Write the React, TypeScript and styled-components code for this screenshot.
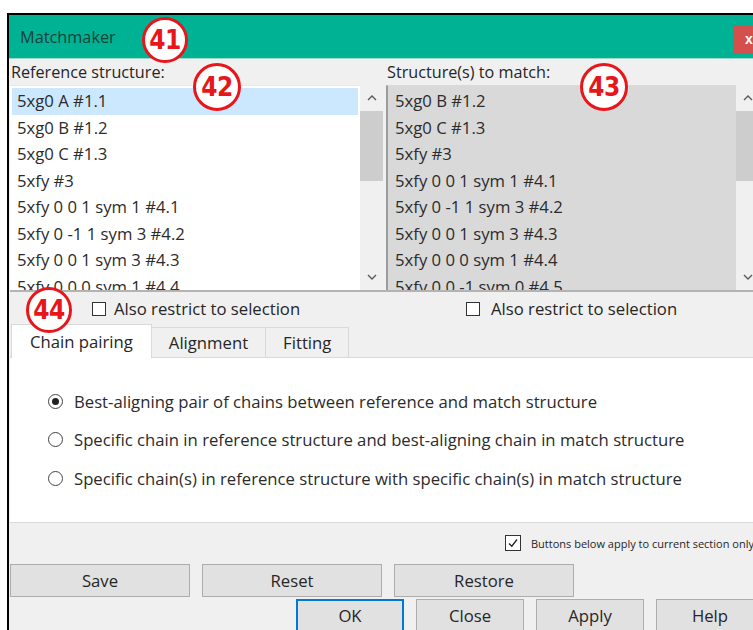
import styled, { createGlobalStyle } from 'styled-components';

const TEXT_SIZE = '16.7px';

const GlobalStyle = createGlobalStyle`
  html, body {
    margin: 0;
    padding: 0;
    background: #fff;
    overflow: hidden;
  }
  body {
    width: 753px;
    height: 630px;
    font-family: 'Open Sans', 'Noto Sans', sans-serif;
    color: #262626;
  }
`;

const Window = styled.div`
  position: relative;
  margin: 13px 0 0 7px;
  width: 755px;
  height: 640px;
  border-top: 2px solid #000;
  border-left: 2px solid #000;
  background: #f0f0f0;
  display: flex;
  flex-direction: column;
`;

const TitleBar = styled.div`
  height: 43px;
  flex: none;
  background: #00b294;
  border-bottom: 1px solid #9ad9cc;
  display: flex;
  align-items: center;
  padding-left: 11px;
`;

const Title = styled.span`
  font-size: 16.3px;
  color: #15413a;
`;

const CloseButton = styled.div`
  margin-left: auto;
  align-self: flex-end;
  margin-bottom: 5px;
  width: 30px;
  height: 28px;
  background: #d4504d;
  color: #fff;
  font: bold 14px 'Liberation Sans', sans-serif;
  display: flex;
  align-items: center;
  justify-content: center;
`;

const Body = styled.div`
  padding-left: 1px;
  display: flex;
  flex-direction: column;
`;

const Columns = styled.div<{ $border?: boolean }>`
  display: grid;
  grid-template-columns: 373px 373px;
  column-gap: 3px;
  ${(p) => (p.$border ? 'border-bottom: 2px solid #b3b3b3;' : '')}
`;

const Label = styled.div`
  height: 26px;
  line-height: 26px;
  font-size: 16.2px;
  padding-left: 1px;
`;

const ListBox = styled.div`
  height: 205px;
  display: flex;
  overflow: hidden;
`;

const Items = styled.div<{ $disabled?: boolean }>`
  flex: 1;
  padding: 2px;
  overflow: hidden;
  background: ${(p) => (p.$disabled ? '#d9d9d9' : '#fff')};
  border-top: 1px solid ${(p) => (p.$disabled ? '#d9d9d9' : '#e6e6e6')};
  ${(p) => (p.$disabled ? 'border-left: 2px solid #9c9c9c;' : '')}
`;

const Row = styled.div<{ $selected?: boolean }>`
  height: 26.5px;
  line-height: 26.5px;
  padding-left: 5px;
  font-size: ${TEXT_SIZE};
  white-space: nowrap;
  color: #2b2b2b;
  background: ${(p) => (p.$selected ? '#cce8ff' : 'transparent')};
`;

const ScrollBar = styled.div`
  width: 23px;
  background: #f0f0f0;
  display: flex;
  flex-direction: column;
  align-items: center;
`;

const Arrow = styled.div`
  height: 26px;
  width: 100%;
  display: flex;
  align-items: center;
  justify-content: center;
`;

const Thumb = styled.div`
  width: 100%;
  height: 70px;
  background: #cdcdcd;
`;

const Track = styled.div`
  flex: 1;
`;

const CheckRow = styled.label<{ $offset: number; $gap: number }>`
  height: 33px;
  display: flex;
  align-items: center;
  gap: ${(p) => p.$gap}px;
  padding-left: ${(p) => p.$offset}px;
  font-size: ${TEXT_SIZE};
  white-space: nowrap;
`;

const Box = styled.span<{ $size?: number }>`
  width: ${(p) => p.$size ?? 14}px;
  height: ${(p) => p.$size ?? 14}px;
  box-sizing: border-box;
  border: 1px solid #333;
  background: #fff;
  display: inline-flex;
  align-items: center;
  justify-content: center;
  flex: none;
`;

const TabStrip = styled.div`
  height: 32px;
  display: flex;
  align-items: flex-end;
  padding-left: 1px;
`;

const Tab = styled.div<{ $active?: boolean }>`
  position: relative;
  z-index: ${(p) => (p.$active ? 1 : 0)};
  box-sizing: border-box;
  height: ${(p) => (p.$active ? 34 : 30)}px;
  padding: 0 ${(p) => (p.$active ? 18 : 17)}px;
  margin-bottom: ${(p) => (p.$active ? -1 : 0)}px;
  display: flex;
  align-items: center;
  font-size: ${TEXT_SIZE};
  white-space: nowrap;
  background: ${(p) => (p.$active ? '#fff' : '#f0f0f0')};
  border: 1px solid #d9d9d9;
  border-bottom: none;
  & + & {
    border-left: none;
  }
`;

const TabPanel = styled.div`
  height: 166px;
  box-sizing: border-box;
  background: #fff;
  border-top: 1px solid #d9d9d9;
  border-bottom: 1px solid #dadada;
  padding: 24px 0 0 38px;
`;

const RadioRow = styled.div`
  height: 38.5px;
  display: flex;
  align-items: center;
  gap: 11px;
  font-size: ${TEXT_SIZE};
  white-space: nowrap;
  color: #2b2b2b;
`;

const RadioDot = styled.span<{ $checked?: boolean }>`
  width: 15px;
  height: 15px;
  box-sizing: border-box;
  border-radius: 50%;
  border: 1px solid #444;
  display: inline-flex;
  align-items: center;
  justify-content: center;
  flex: none;
  &::after {
    content: '';
    width: 7px;
    height: 7px;
    border-radius: 50%;
    background: ${(p) => (p.$checked ? '#222' : 'transparent')};
  }
`;

const OptionRow = styled.div`
  height: 20px;
  margin: 10px 0 11px;
  display: flex;
  align-items: center;
  gap: 10px;
  padding-left: 495px;
  font-size: 11px;
  white-space: nowrap;
`;

const ButtonRow = styled.div<{ $end?: boolean }>`
  display: flex;
  gap: 12px;
  justify-content: ${(p) => (p.$end ? 'flex-end' : 'flex-start')};
  margin-bottom: 2px;
`;

const Button = styled.div<{ $width: number; $focused?: boolean }>`
  box-sizing: border-box;
  width: ${(p) => p.$width}px;
  height: 33px;
  background: #e1e1e1;
  border: ${(p) => (p.$focused ? '2px solid #0078d7' : '1px solid #adadad')};
  display: flex;
  align-items: center;
  justify-content: center;
  font-size: ${TEXT_SIZE};
  color: #262626;
`;

const Badge = styled.div<{ $x: number; $y: number; $size: number }>`
  position: absolute;
  left: ${(p) => p.$x}px;
  top: ${(p) => p.$y}px;
  width: ${(p) => p.$size}px;
  height: ${(p) => p.$size}px;
  box-sizing: border-box;
  border: 3px solid #e8151b;
  border-radius: 50%;
  background: #fff;
  color: #e8151b;
  display: flex;
  align-items: center;
  justify-content: center;
  font-family: 'Liberation Sans Narrow', 'DejaVu Sans Condensed', 'Liberation Sans', sans-serif;
  font-weight: bold;
  font-size: 26px;
  letter-spacing: -0.5px;
  z-index: 5;
`;

const Chevron = ({ up }: { up?: boolean }) => (
  <svg width="10" height="6" viewBox="0 0 10 6">
    <path
      d={up ? 'M1 5 L5 1 L9 5' : 'M1 1 L5 5 L9 1'}
      fill="none"
      stroke="#5a5a5a"
      strokeWidth="1.4"
    />
  </svg>
);

const Check = () => (
  <svg width="12" height="12" viewBox="0 0 12 12">
    <path d="M2 6.5 L4.8 9.2 L10 2.5" fill="none" stroke="#222" strokeWidth="1.3" />
  </svg>
);

const reference = [
  '5xg0 A #1.1',
  '5xg0 B #1.2',
  '5xg0 C #1.3',
  '5xfy #3',
  '5xfy 0 0 1 sym 1 #4.1',
  '5xfy 0 -1 1 sym 3 #4.2',
  '5xfy 0 0 1 sym 3 #4.3',
  '5xfy 0 0 0 sym 1 #4.4',
];

const toMatch = [
  '5xg0 B #1.2',
  '5xg0 C #1.3',
  '5xfy #3',
  '5xfy 0 0 1 sym 1 #4.1',
  '5xfy 0 -1 1 sym 3 #4.2',
  '5xfy 0 0 1 sym 3 #4.3',
  '5xfy 0 0 0 sym 1 #4.4',
  '5xfy 0 0 -1 sym 0 #4.5',
];

const pairingOptions = [
  'Best-aligning pair of chains between reference and match structure',
  'Specific chain in reference structure and best-aligning chain in match structure',
  'Specific chain(s) in reference structure with specific chain(s) in match structure',
];

const StructureList = ({
  items,
  disabled,
}: {
  items: string[];
  disabled?: boolean;
}) => (
  <ListBox>
    <Items $disabled={disabled}>
      {items.map((item, i) => (
        <Row key={item} $selected={!disabled && i === 0}>
          {item}
        </Row>
      ))}
    </Items>
    <ScrollBar>
      <Arrow>
        <Chevron up />
      </Arrow>
      <Thumb />
      <Track />
      <Arrow>
        <Chevron />
      </Arrow>
    </ScrollBar>
  </ListBox>
);

export default function App() {
  return (
    <>
      <GlobalStyle />
      <Window>
        <TitleBar>
          <Title>Matchmaker</Title>
          <CloseButton>x</CloseButton>
        </TitleBar>

        <Body>
          <Columns $border>
            <div>
              <Label>Reference structure:</Label>
              <StructureList items={reference} />
            </div>
            <div>
              <Label>Structure(s) to match:</Label>
              <StructureList items={toMatch} disabled />
            </div>
          </Columns>

          <Columns>
            <CheckRow $offset={82} $gap={8}>
              <Box />
              Also restrict to selection
            </CheckRow>
            <CheckRow $offset={80} $gap={11}>
              <Box />
              Also restrict to selection
            </CheckRow>
          </Columns>

          <TabStrip>
            <Tab $active>Chain pairing</Tab>
            <Tab>Alignment</Tab>
            <Tab>Fitting</Tab>
          </TabStrip>

          <TabPanel>
            {pairingOptions.map((option, i) => (
              <RadioRow key={option}>
                <RadioDot $checked={i === 0} />
                {option}
              </RadioRow>
            ))}
          </TabPanel>

          <OptionRow>
            <Box $size={16}>
              <Check />
            </Box>
            Buttons below apply to current section only
          </OptionRow>

          <ButtonRow>
            <Button $width={180}>Save</Button>
            <Button $width={180}>Reset</Button>
            <Button $width={180}>Restore</Button>
          </ButtonRow>
          <ButtonRow $end>
            <Button $width={108} $focused>
              OK
            </Button>
            <Button $width={108}>Close</Button>
            <Button $width={108}>Apply</Button>
            <Button $width={108}>Help</Button>
          </ButtonRow>
        </Body>

        <Badge $x={133} $y={2} $size={46}>
          41
        </Badge>
        <Badge $x={184} $y={48} $size={48}>
          42
        </Badge>
        <Badge $x={571} $y={48} $size={48}>
          43
        </Badge>
        <Badge $x={17} $y={272} $size={46}>
          44
        </Badge>
      </Window>
    </>
  );
}
